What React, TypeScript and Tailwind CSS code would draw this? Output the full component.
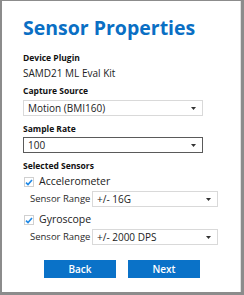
import React from 'react';

const Caret: React.FC = () => (
  <svg width="5" height="3" viewBox="0 0 5 3" className="shrink-0">
    <path d="M0 0 H5 L2.5 3 Z" fill="#333" />
  </svg>
);

interface SelectBoxProps {
  value: string;
  focused?: boolean;
  className?: string;
}

const SelectBox: React.FC<SelectBoxProps> = ({ value, focused, className }) => (
  <div
    className={
      'flex h-[16px] shrink-0 items-center justify-between border bg-white pl-[4px] pr-[6px] text-[10px] text-[#222] ' +
      (focused ? 'border-[#5a5a5a] ' : 'border-[#d9d9d9] ') +
      (className ?? '')
    }
  >
    <span className="whitespace-nowrap">{value}</span>
    <Caret />
  </div>
);

const Check: React.FC<{ label: string }> = ({ label }) => (
  <div className="flex h-[12px] items-center gap-[5px] pl-[1px]">
    <div className="flex h-[10px] w-[10px] items-center justify-center border border-[#d0d0d0] bg-white">
      <svg width="8" height="7" viewBox="0 0 8 7">
        <path d="M1 3.6 L3 5.6 L7 1" fill="none" stroke="#1e88e5" strokeWidth="1.6" />
      </svg>
    </div>
    <span className="text-[10.5px] text-[#222]">{label}</span>
  </div>
);

const RangeRow: React.FC<{ value: string; className?: string }> = ({ value, className }) => (
  <div className={'flex items-center pl-[7px] ' + (className ?? '')}>
    <span className="w-[62px] shrink-0 whitespace-nowrap text-[9.5px] text-[#2a2a2a]">Sensor Range</span>
    <SelectBox value={value} className="w-[126px]" />
  </div>
);

const App: React.FC = () => {
  return (
    <div className="h-[295px] w-[244px] bg-[#8c8c8c] pb-[3px] pl-[2px] pr-[3px] pt-[1px]">
      <div
        className="h-full w-full border-r border-[#e0e0e0] bg-white pl-[21px] pt-[14px]"
        style={{ fontFamily: '"Open Sans", "Noto Sans", sans-serif' }}
      >
        <h1 className="text-[19.5px] font-bold leading-[26px] text-[#0a6fc4]">Sensor Properties</h1>

        <div className="mt-[11px] text-[8.5px] font-bold leading-[12px] text-[#111]">Device Plugin</div>
        <div className="mt-[2px] text-[10px] leading-[14px] text-[#222]">SAMD21 ML Eval Kit</div>

        <div className="mt-[5px] text-[8.5px] font-bold leading-[12px] text-[#111]">Capture Source</div>
        <SelectBox value="Motion (BMI160)" className="mt-[3px] w-[180px]" />

        <div className="mt-[7px] text-[8.5px] font-bold leading-[12px] text-[#111]">Sample Rate</div>
        <SelectBox value="100" focused className="mt-[2px] w-[180px]" />

        <div className="mt-[7px] text-[8.5px] font-bold leading-[12px] text-[#111]">Selected Sensors</div>
        <div className="mt-[4px]">
          <Check label="Accelerometer" />
        </div>
        <RangeRow value="+/- 16G" className="mt-[3px]" />
        <div className="mt-[7px]">
          <Check label="Gyroscope" />
        </div>
        <RangeRow value="+/- 2000 DPS" className="mt-[3px]" />

        <div className="mt-[15px] flex gap-[12px] pl-[21px]">
          <button className="h-[18px] w-[72px] bg-[#0a72c8] text-[10px] font-semibold text-white">Back</button>
          <button className="h-[18px] w-[72px] bg-[#0a72c8] text-[10px] font-semibold text-white">Next</button>
        </div>
      </div>
    </div>
  );
};

export default App;
